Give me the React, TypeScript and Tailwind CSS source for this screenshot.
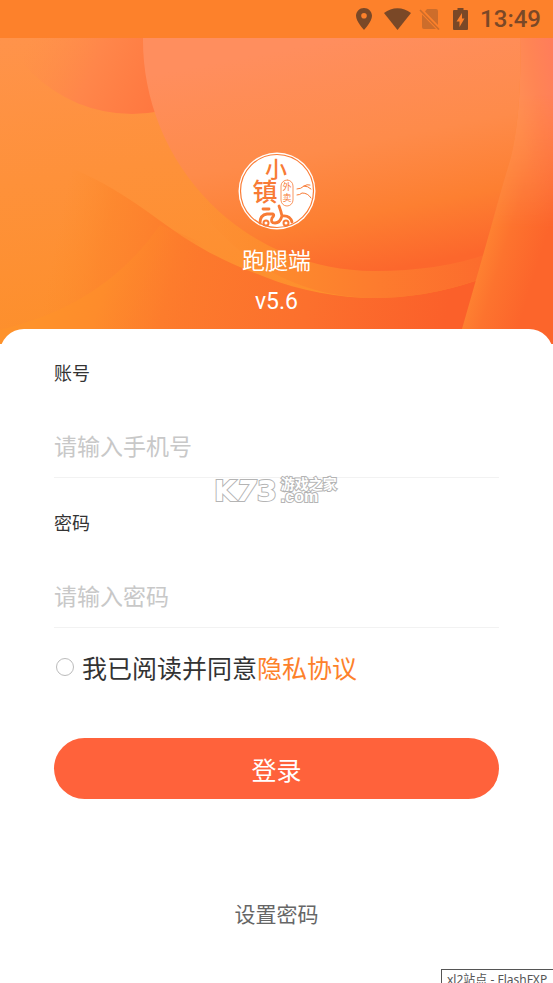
import { useState } from "react";

const StatusBar = () => (
  <div className="flex h-[38px] items-center justify-end bg-[#fd812b] pr-3 text-[#7a4827]">
    {/* location */}
    <svg className="mr-3 h-[22px] w-4" viewBox="0 0 16 22" fill="currentColor">
      <path
        fillRule="evenodd"
        d="M8 0C3.600 0 0 3.500 0 7.800C0 13.600 8 22 8 22S16 13.600 16 7.800C16 3.500 12.400 0 8 0ZM8 5A2.800 2.800 0 1 1 8 10.600A2.800 2.800 0 0 1 8 5Z"
      />
    </svg>
    {/* wifi */}
    <svg className="mr-2 h-[22px] w-[27px]" viewBox="0 0 27 22" fill="currentColor">
      <path d="M0 5C8 -1.500 19 -1.500 27 5L13.500 22Z" />
    </svg>
    {/* no sim */}
    <svg className="mr-3 h-[22px] w-[22px] text-[#cd6d2b]" viewBox="0 0 22 22" fill="currentColor">
      <path d="M8 1H17Q19 1 19 3V17L6 3.500ZM3 6.500L17 21H5Q3 21 3 19Z" />
      <path d="M1 2L20 21.500" fill="none" stroke="currentColor" strokeWidth="1.600" />
    </svg>
    {/* battery */}
    <svg className="mr-3 h-[22px] w-[15px]" viewBox="0 0 15 22" fill="currentColor">
      <path
        fillRule="evenodd"
        d="M4.500 0H10.500V2H14Q15 2 15 3V21Q15 22 14 22H1Q0 22 0 21V3Q0 2 1 2H4.500ZM9 5L3.500 13.500H6.500V19L11.500 10.500H9Z"
      />
    </svg>
    <span className="font-[Roboto] text-2xl leading-10 font-medium">13:49</span>
  </div>
);

const BannerArt = () => (
  <svg
    className="absolute inset-0 h-full w-full"
    viewBox="0 38 553 306"
    preserveAspectRatio="none"
    aria-hidden="true"
  >
    <defs>
      <linearGradient id="base" x1="0" y1="0" x2="0.25" y2="1">
        <stop offset="0" stopColor="#ff934b" />
        <stop offset="0.45" stopColor="#fe913a" />
        <stop offset="1" stopColor="#fd8f2a" />
      </linearGradient>
      <linearGradient id="small" gradientUnits="userSpaceOnUse" x1="25" y1="50" x2="150" y2="110">
        <stop offset="0" stopColor="#ff8d4c" stopOpacity="0" />
        <stop offset="0.5" stopColor="#ff864a" />
        <stop offset="1" stopColor="#ff7840" />
      </linearGradient>
      <linearGradient id="band" gradientUnits="userSpaceOnUse" x1="200" y1="0" x2="490" y2="0">
        <stop offset="0" stopColor="#fd8d30" stopOpacity="0" />
        <stop offset="0.25" stopColor="#fd8b2d" />
        <stop offset="0.6" stopColor="#fd7c2e" />
        <stop offset="1" stopColor="#fc6b2d" />
      </linearGradient>
      <linearGradient id="big" gradientUnits="userSpaceOnUse" x1="340" y1="38" x2="385" y2="271">
        <stop offset="0" stopColor="#ff8e5e" />
        <stop offset="0.45" stopColor="#fe8b4a" />
        <stop offset="0.75" stopColor="#fd7f31" />
        <stop offset="1" stopColor="#fc672c" />
      </linearGradient>
      <linearGradient id="wave" gradientUnits="userSpaceOnUse" x1="60" y1="220" x2="450" y2="300">
        <stop offset="0" stopColor="#fd8c2b" stopOpacity="0" />
        <stop offset="0.12" stopColor="#fd852c" stopOpacity="0.7" />
        <stop offset="0.3" stopColor="#fd7b2c" />
        <stop offset="0.65" stopColor="#fc702d" />
        <stop offset="1" stopColor="#fb602a" />
      </linearGradient>
      <linearGradient id="hill" gradientUnits="userSpaceOnUse" x1="50" y1="270" x2="185" y2="310">
        <stop offset="0" stopColor="#fe922b" />
        <stop offset="0.4" stopColor="#fe8c2b" />
        <stop offset="1" stopColor="#fd7c2c" stopOpacity="0" />
      </linearGradient>
      <linearGradient id="ribbon" gradientUnits="userSpaceOnUse" x1="482" y1="240" x2="540" y2="258">
        <stop offset="0" stopColor="#fe8532" />
        <stop offset="0.4" stopColor="#fd732e" />
        <stop offset="1" stopColor="#fc652b" />
      </linearGradient>
      <linearGradient id="ribbonFade" x1="0" y1="0" x2="0" y2="1">
        <stop offset="0" stopColor="#fff" />
        <stop offset="0.3" stopColor="#fff" />
        <stop offset="1" stopColor="#000" />
      </linearGradient>
      <linearGradient id="ribbonTop" gradientUnits="userSpaceOnUse" x1="512" y1="80" x2="556" y2="72">
        <stop offset="0" stopColor="#ff8f55" />
        <stop offset="0.5" stopColor="#ff8554" />
        <stop offset="1" stopColor="#ff7d5a" />
      </linearGradient>
      <mask id="topMask">
        <rect x="460" y="38" width="93" height="190" fill="url(#ribbonFade)" />
      </mask>
    </defs>
    <rect y="38" width="553" height="306" fill="url(#base)" />
    <circle cx="132" cy="-28" r="142" fill="url(#small)" />
    <path
      d="M153 114C180 215 262 298 374 298Q425 298 475 281L553 250V114Z"
      fill="url(#band)"
    />
    <path
      d="M0 150C60 155 110 184 159 220C197 248 225 262 265 277C300 291 340 298 374 298Q425 298 475 281L553 250V344H0Z"
      fill="url(#wave)"
    />
    <path d="M0 330Q105 305 160 225L220 250V344H0Z" fill="url(#hill)" />
    <path d="M143 38A231 231 0 0 0 374 271Q440 271 487 254L553 220V38Z" fill="url(#big)" />
    <path d="M520 38Q522 110 511 157L462 329V344H553V38Z" fill="url(#ribbon)" />
    <path d="M520 38Q522 110 511 157L490 228H553V38Z" fill="url(#ribbonTop)" mask="url(#topMask)" />
  </svg>
);

const Logo = () => (
  <svg className="h-[78px] w-[78px]" viewBox="0 0 78 78" role="img" aria-label="小镇外卖">
    <circle cx="39" cy="39" r="38.500" fill="#fff" />
    <circle cx="39" cy="39" r="36.500" fill="none" stroke="#fb7c35" strokeWidth="1.200" />
    <g fill="#f87b35" fontFamily="'Noto Sans CJK SC', sans-serif" textAnchor="middle">
      <text x="38" y="25" fontSize="22" fontWeight="500">小</text>
      <text x="27" y="49" fontSize="25" fontWeight="500">镇</text>
      <text x="49" y="38" fontSize="9">外</text>
      <text x="49" y="49" fontSize="9">卖</text>
    </g>
    <g fill="none" stroke="#f87b35" strokeLinecap="round" strokeLinejoin="round">
      <rect x="43" y="28" width="12" height="26" rx="6" strokeWidth="0.800" />
      <path
        d="M59 37Q63 37 66 34Q69 32 72 33M66 34Q70 34 73 37M59 43Q62 43 64 41Q70 41 73 46"
        strokeWidth="1"
      />
      <path d="M25 57H31" strokeWidth="2.800" />
      <path
        d="M22 71Q22 63 29 62H35Q37 63 34 66Q32 71 37 71Q42 71 44 64Q43 59 41 54M44 64Q52 63 54 70"
        strokeWidth="2.800"
      />
      <circle cx="28" cy="71" r="2.500" strokeWidth="2" />
      <circle cx="48" cy="71" r="2.500" strokeWidth="2" />
    </g>
  </svg>
);

const Watermark = () => (
  <div
    aria-hidden="true"
    className="pointer-events-none absolute top-[148px] left-[214px] flex items-center gap-1 font-bold text-white [-webkit-text-stroke:2px_#b4b4b4] [paint-order:stroke_fill]"
  >
    <span className="font-['DejaVu_Sans'] text-[29px] leading-7">
      K<i>7</i>3
    </span>
    <span className="flex flex-col font-['Liberation_Sans','Noto_Sans_CJK_SC',sans-serif]">
      <span className="text-sm leading-3">游戏之家</span>
      <span className="text-base leading-[14px]">.com</span>
    </span>
  </div>
);

type FieldProps = {
  id: string;
  label: string;
  type: string;
  placeholder: string;
  value: string;
  onChange: (value: string) => void;
};

const Field = ({ id, label, type, placeholder, value, onChange }: FieldProps) => (
  <div className="border-b border-[#f2f2f2]">
    <label htmlFor={id} className="block text-lg leading-[30px] text-[#333333]">
      {label}
    </label>
    <input
      id={id}
      type={type}
      placeholder={placeholder}
      value={value}
      onChange={(e) => onChange(e.target.value)}
      className="mt-7 block h-[60px] w-full bg-transparent text-[23px] text-[#333333] outline-none placeholder:text-[#c8c8c8]"
    />
  </div>
);

const App = () => {
  const [phone, setPhone] = useState("");
  const [password, setPassword] = useState("");
  const [agreed, setAgreed] = useState(false);

  return (
    <div className="relative flex min-h-screen flex-col overflow-hidden bg-white font-[Roboto,'Noto_Sans_CJK_SC',sans-serif]">
      <StatusBar />

      {/* BANNER */}
      <header className="relative h-[306px]">
        <BannerArt />
        <div className="relative flex flex-col items-center pt-[114px] text-[23px] leading-10 text-white">
          <Logo />
          <h1 className="mt-3">跑腿端</h1>
          <p>v5.6</p>
        </div>
      </header>

      {/* FORM */}
      <main className="relative -mt-[15px] flex-1 rounded-t-[24px] bg-white px-[54px] pt-[30px]">
        <form onSubmit={(e) => e.preventDefault()}>
          <div className="flex flex-col gap-[31px]">
            <Field id="phone" label="账号" type="tel" placeholder="请输入手机号" value={phone} onChange={setPhone} />
            <Field id="password" label="密码" type="password" placeholder="请输入密码" value={password} onChange={setPassword} />
          </div>

          <div className="mt-5 flex items-center font-['Noto_Sans_CJK_SC',sans-serif] text-[25px] leading-[38px] text-[#333333]">
            <input
              id="agree"
              type="radio"
              checked={agreed}
              onChange={() => setAgreed(true)}
              className="mr-2 ml-0.5 h-[18px] w-[18px] appearance-none rounded-full border border-[#bbbbbb] checked:border-[5px] checked:border-[#ff623b]"
            />
            <label htmlFor="agree">我已阅读并同意</label>
            <a href="#privacy" className="text-[#fd812b]">
              隐私协议
            </a>
          </div>

          <button
            type="submit"
            className="mt-[52px] h-[61px] w-full cursor-pointer rounded-full bg-[#ff623b] font-['Noto_Sans_CJK_SC',sans-serif] text-[25px] leading-[38px] text-white"
          >
            登录
          </button>
        </form>

        <div className="mt-[98px] text-center">
          <button
            type="button"
            className="cursor-pointer font-['Noto_Sans_CJK_SC',sans-serif] text-[21px] leading-8 text-[#666666]"
          >
            设置密码
          </button>
        </div>

        <Watermark />
      </main>

      {/* TOOLTIP */}
      <div className="absolute right-0 bottom-0 h-[14px] w-28 overflow-hidden border-t border-l border-[#555555] bg-white pl-[5px] font-['Noto_Sans','Noto_Sans_CJK_SC',sans-serif] text-xs leading-5 whitespace-nowrap text-[#555555]">
        xl2站点 - FlashFXP
      </div>
    </div>
  );
};

export default App;
